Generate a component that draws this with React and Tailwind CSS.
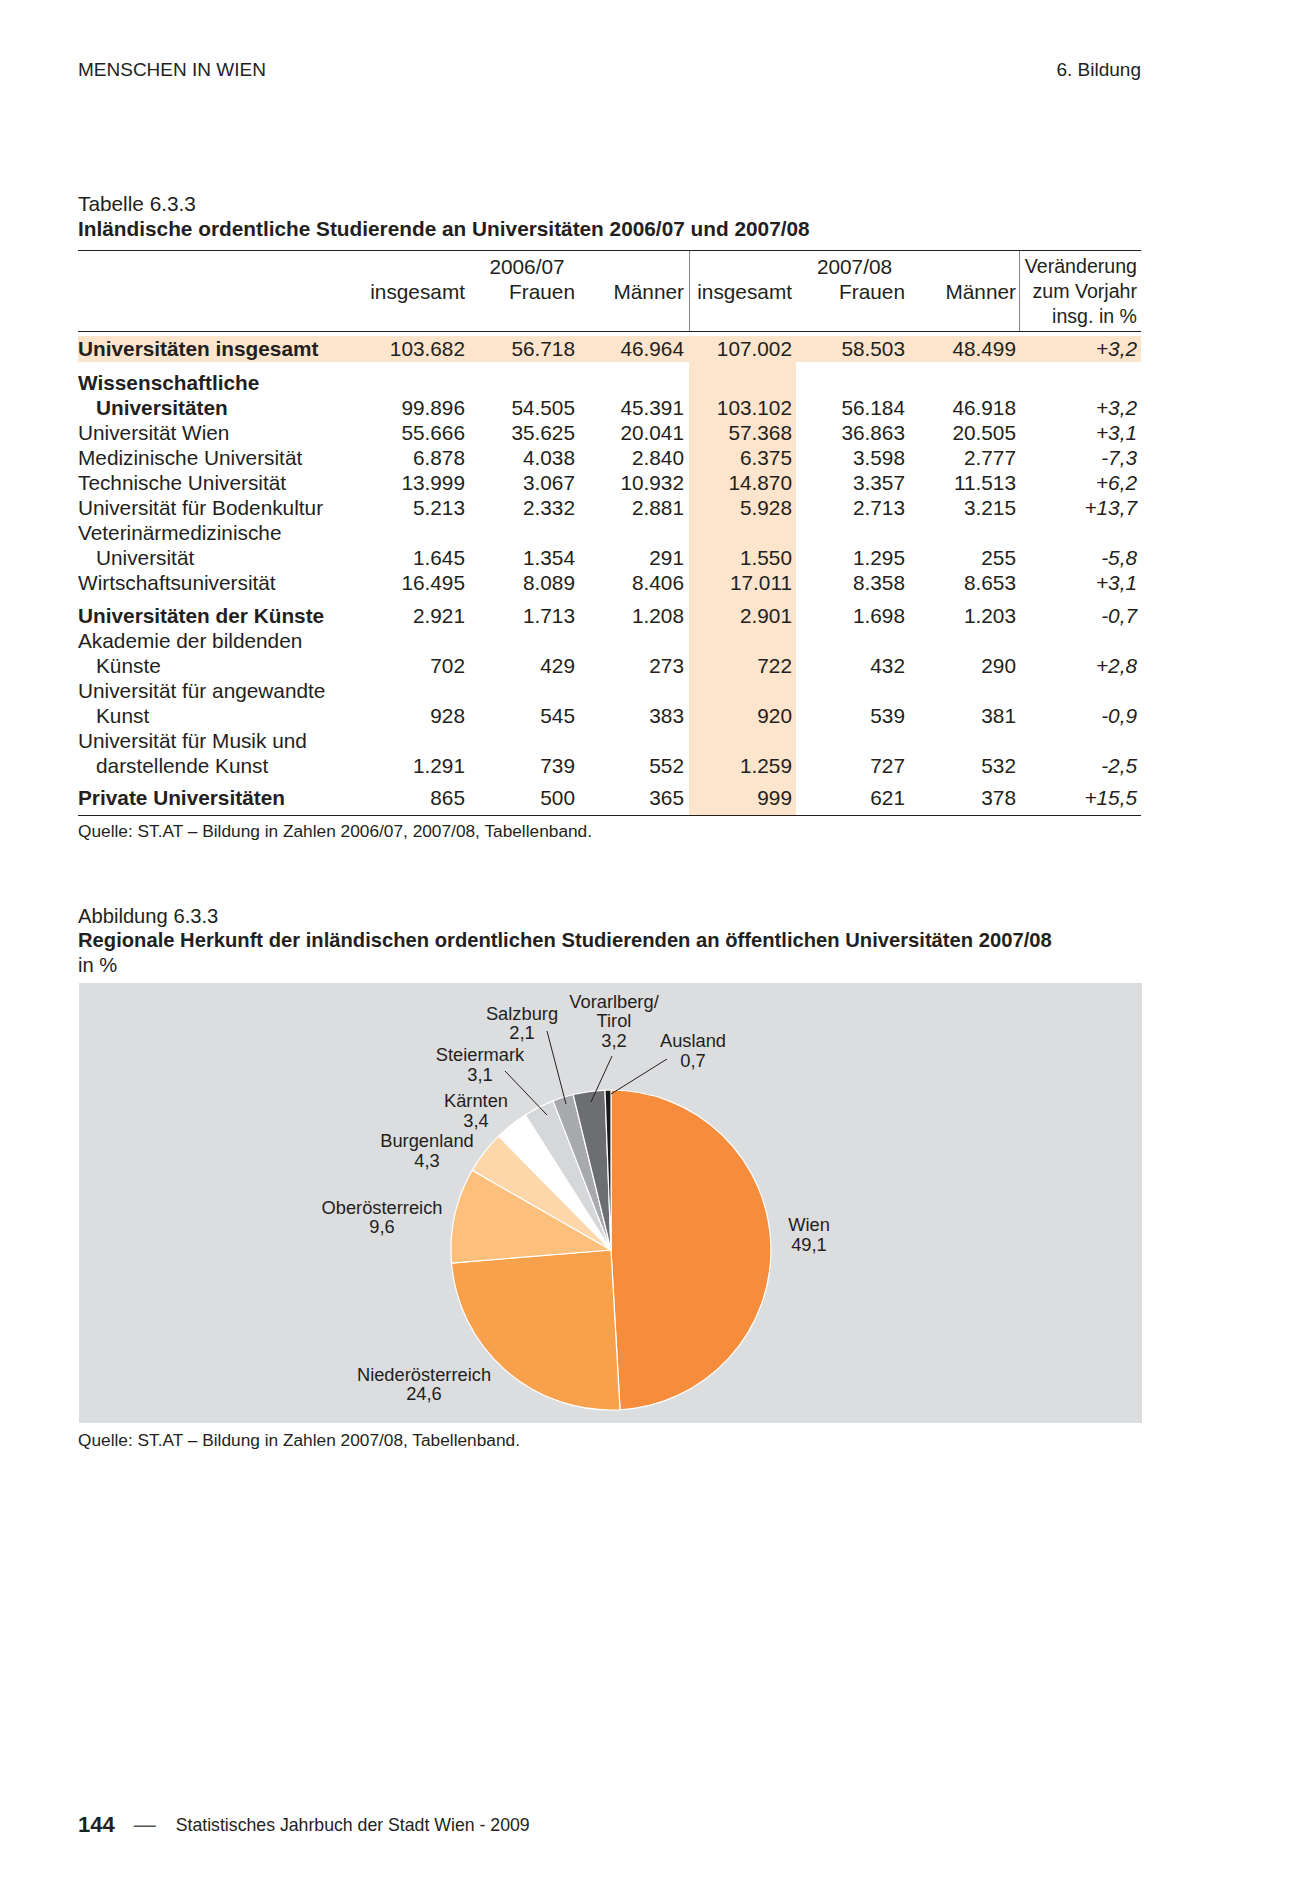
const cols = "grid grid-cols-[279px_112px_110px_110px_107px_113px_110px_122px]";
const pads = ["pr-[4px]", "pr-[4px]", "pr-[5px]", "pr-[4px]", "pr-[4px]", "pr-[3px]", "pr-[4px]"];

const group1 = [
  { label: "Wissenschaftliche", bold: true },
  { label: "Universitäten", bold: true, indent: true, v: ["99.896", "54.505", "45.391", "103.102", "56.184", "46.918", "+3,2"] },
  { label: "Universität Wien", v: ["55.666", "35.625", "20.041", "57.368", "36.863", "20.505", "+3,1"] },
  { label: "Medizinische Universität", v: ["6.878", "4.038", "2.840", "6.375", "3.598", "2.777", "-7,3"] },
  { label: "Technische Universität", v: ["13.999", "3.067", "10.932", "14.870", "3.357", "11.513", "+6,2"] },
  { label: "Universität für Bodenkultur", v: ["5.213", "2.332", "2.881", "5.928", "2.713", "3.215", "+13,7"] },
  { label: "Veterinärmedizinische" },
  { label: "Universität", indent: true, v: ["1.645", "1.354", "291", "1.550", "1.295", "255", "-5,8"] },
  { label: "Wirtschaftsuniversität", v: ["16.495", "8.089", "8.406", "17.011", "8.358", "8.653", "+3,1"] },
];

const group2 = [
  { label: "Universitäten der Künste", bold: true, v: ["2.921", "1.713", "1.208", "2.901", "1.698", "1.203", "-0,7"] },
  { label: "Akademie der bildenden" },
  { label: "Künste", indent: true, v: ["702", "429", "273", "722", "432", "290", "+2,8"] },
  { label: "Universität für angewandte" },
  { label: "Kunst", indent: true, v: ["928", "545", "383", "920", "539", "381", "-0,9"] },
  { label: "Universität für Musik und" },
  { label: "darstellende Kunst", indent: true, v: ["1.291", "739", "552", "1.259", "727", "532", "-2,5"] },
];

const group3 = [
  { label: "Private Universitäten", bold: true, v: ["865", "500", "365", "999", "621", "378", "+15,5"] },
];

function Row({ label, bold, indent, v, className = "" }) {
  return (
    <div className={`${cols} h-[25px] leading-[25px] ${className}`}>
      <div className={`whitespace-nowrap ${bold ? "font-bold" : ""} ${indent ? "pl-[18px]" : ""}`}>{label}</div>
      {pads.map((p, i) => (
        <div key={i} className={`text-right whitespace-nowrap ${p} ${i === 6 ? "italic" : ""}`}>
          {v ? v[i] : ""}
        </div>
      ))}
    </div>
  );
}

function StudTable() {
  return (
    <div className="w-[1063px]">
      {/* header */}
      <div className="flex border-t border-b border-[#231f20] pt-[3px] pb-[2px] leading-[25px]">
        <div className="w-[279px]" />
        <div className="w-[332px]">
          <div className="text-center pl-[8px]">2006/07</div>
          <div className="flex">
            <div className="w-[112px] text-right pr-[4px]">insgesamt</div>
            <div className="w-[110px] text-right pr-[4px]">Frauen</div>
            <div className="w-[110px] text-right pr-[5px]">Männer</div>
          </div>
        </div>
        <div className="w-[330px] border-l border-[#85878a] -mt-[3px] -mb-[2px] pt-[3px] pb-[2px]">
          <div className="text-center">2007/08</div>
          <div className="flex">
            <div className="w-[106px] text-right pr-[4px]">insgesamt</div>
            <div className="w-[113px] text-right pr-[4px]">Frauen</div>
            <div className="w-[110px] text-right pr-[3px]">Männer</div>
          </div>
        </div>
        <div className="w-[122px] border-l border-[#85878a] text-right pr-[4px] -mt-[3px] -mb-[2px] pt-[3px] pb-[2px] text-[19.6px]">
          <div>Veränderung</div>
          <div>zum Vorjahr</div>
          <div>insg. in %</div>
        </div>
      </div>

      {/* body */}
      <div className="border-b border-[#231f20] pb-[5px] bg-[linear-gradient(to_right,transparent_611px,#fde4cc_611px,#fde4cc_718px,transparent_718px)]">
        <Row
          className="mt-[4px] h-[26px] leading-[26px] bg-[#fde4cc]"
          label="Universitäten insgesamt"
          bold
          v={["103.682", "56.718", "46.964", "107.002", "58.503", "48.499", "+3,2"]}
        />
        <div className="mt-[8px]">
          {group1.map((r, i) => <Row key={i} {...r} />)}
        </div>
        <div className="mt-[8px]">
          {group2.map((r, i) => <Row key={i} {...r} />)}
        </div>
        <div className="mt-[7px]">
          {group3.map((r, i) => <Row key={i} {...r} />)}
        </div>
      </div>
    </div>
  );
}

const CX = 532;
const CY = 267;
const R = 160;

const slices = [
  { p: 49.1, c: "#f68d3c" },
  { p: 24.6, c: "#f8a14d" },
  { p: 9.6, c: "#fcbf7c" },
  { p: 4.3, c: "#fdd6a9" },
  { p: 3.4, c: "#ffffff" },
  { p: 3.1, c: "#d6d7d9" },
  { p: 2.1, c: "#a7a9ac" },
  { p: 3.2, c: "#6d6e71" },
  { p: 0.7, c: "#1a1a1a" },
];

function pt(a, r = R) {
  const t = (a * Math.PI) / 180;
  return [CX + r * Math.sin(t), CY - r * Math.cos(t)];
}

function PieChart() {
  let acc = 0;
  const paths = slices.map((s, i) => {
    const a0 = acc * 3.6;
    acc += s.p;
    const a1 = i === slices.length - 1 ? 360 : acc * 3.6;
    const [x0, y0] = pt(a0);
    const [x1, y1] = pt(a1);
    const large = a1 - a0 > 180 ? 1 : 0;
    return (
      <path
        key={i}
        d={`M${CX} ${CY} L${x0.toFixed(2)} ${y0.toFixed(2)} A${R} ${R} 0 ${large} 1 ${x1.toFixed(2)} ${y1.toFixed(2)} Z`}
        fill={s.c}
        stroke="#ffffff"
        strokeWidth="1.2"
        strokeLinejoin="round"
      />
    );
  });

  const labels = [
    { x: 443, y: [37, 56], t: ["Salzburg", "2,1"] },
    { x: 535, y: [25, 44, 64], t: ["Vorarlberg/", "Tirol", "3,2"] },
    { x: 614, y: [64, 84], t: ["Ausland", "0,7"] },
    { x: 401, y: [78, 98], t: ["Steiermark", "3,1"] },
    { x: 397, y: [124, 144], t: ["Kärnten", "3,4"] },
    { x: 348, y: [164, 184], t: ["Burgenland", "4,3"] },
    { x: 303, y: [231, 250], t: ["Oberösterreich", "9,6"] },
    { x: 730, y: [248, 268], t: ["Wien", "49,1"] },
    { x: 345, y: [398, 417], t: ["Niederösterreich", "24,6"] },
  ];

  return (
    <svg width="1063" height="440" viewBox="0 0 1063 440" className="block">
      {paths}
      <g stroke="#231f20" strokeWidth="1">
        <line x1="468" y1="48" x2="487" y2="121" />
        <line x1="533" y1="73" x2="512" y2="119" />
        <line x1="588" y1="76" x2="532" y2="111" />
        <line x1="426" y1="88" x2="468" y2="132" />
      </g>
      <g fill="#231f20" fontSize="18.3" fontFamily="'Liberation Sans', Arial, sans-serif" textAnchor="middle">
        {labels.map((l, i) =>
          l.t.map((s, j) => (
            <text key={`${i}-${j}`} x={l.x} y={l.y[j]}>
              {s}
            </text>
          ))
        )}
      </g>
    </svg>
  );
}

export default function App() {
  return (
    <div className="min-h-[1889px] w-[1300px] bg-white text-[#231f20] font-['Liberation_Sans',Arial,sans-serif]">
      <div className="pl-[78px] w-[1141px]">
        {/* running head */}
        <div className="pt-[58px] flex justify-between text-[19px] leading-[24px]">
          <span>MENSCHEN IN WIEN</span>
          <span>6. Bildung</span>
        </div>

        {/* table */}
        <div className="mt-[109px] text-[20.8px] leading-[25px]">
          <div>Tabelle 6.3.3</div>
          <div className="font-bold">Inländische ordentliche Studierende an Universitäten 2006/07 und 2007/08</div>
        </div>
        <div className="mt-[9px] text-[20.8px]">
          <StudTable />
        </div>
        <div className="mt-[5px] text-[17.3px] leading-[20px]">
          Quelle: ST.AT – Bildung in Zahlen 2006/07, 2007/08, Tabellenband.
        </div>

        {/* chart */}
        <div className="mt-[63px] text-[20.2px] leading-[25px]">
          <div>Abbildung 6.3.3</div>
          <div className="font-bold -mt-[1px]">
            Regionale Herkunft der inländischen ordentlichen Studierenden an öffentlichen Universitäten 2007/08
          </div>
          <div>in %</div>
        </div>
        <div className="mt-[5px] ml-[1px] w-[1063px] h-[440px] bg-[#dcdddf]">
          <PieChart />
        </div>
        <div className="mt-[7px] text-[17.3px] leading-[20px]">
          Quelle: ST.AT – Bildung in Zahlen 2007/08, Tabellenband.
        </div>

        {/* footer */}
        <div className="mt-[363px] flex items-center text-[17.7px] leading-[24px]">
          <span className="font-bold text-[22px]">144</span>
          <span className="ml-[19px] text-[#555] text-[22px]">—</span>
          <span className="ml-[20px]">Statistisches Jahrbuch der Stadt Wien - 2009</span>
        </div>
      </div>
    </div>
  );
}
